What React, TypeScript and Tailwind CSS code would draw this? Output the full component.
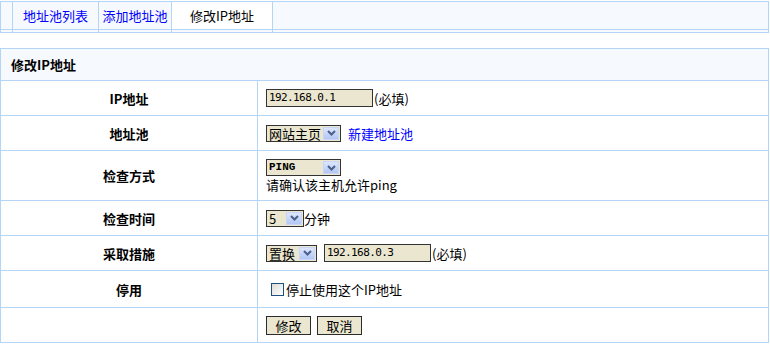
import React from "react";

const BLUE = "border-[#B4D5F5]";

function Chevron() {
  return (
    <svg width="9" height="6" viewBox="0 0 9 6">
      <path d="M1 1 L4.5 4.5 L8 1" fill="none" stroke="#4A5F8A" strokeWidth="2" />
    </svg>
  );
}

function Sel({ w, text, mono }: { w: string; text: string; mono?: boolean }) {
  return (
    <div className={`flex h-[17px] items-stretch border border-[#333] bg-[#EAE6CF] ${w}`}>
      <span
        className={`flex min-w-0 flex-1 items-center whitespace-nowrap pl-[2px] leading-[15px] ${
          mono ? "font-['Liberation_Mono',monospace] text-[11px] font-bold" : "text-[13px]"
        }`}
      >
        {text}
      </span>
      <span className="m-[1px] flex w-[16px] shrink-0 items-center justify-center border border-[#C7D6F6] bg-gradient-to-b from-[#DCE6FD] to-[#B3C7F4]">
        <Chevron />
      </span>
    </div>
  );
}

function Inp({ value }: { value: string }) {
  return (
    <div className="flex h-[18px] w-[107px] items-center border border-[#333] bg-[#EAE6CF] pl-[2px] font-['DejaVu_Sans_Mono',monospace] text-[11px] leading-[14px] tracking-[-0.6px] text-black">
      {value}
    </div>
  );
}

function Row({
  label,
  h,
  children,
  last,
}: {
  label: string;
  h: string;
  children: React.ReactNode;
  last?: boolean;
}) {
  return (
    <div className={`flex ${h} ${last ? "" : `border-b ${BLUE}`}`}>
      <div className={`flex w-[257px] items-center justify-center border-r ${BLUE} text-[13px] font-bold`}>
        {label}
      </div>
      <div className="flex flex-1 items-center pl-[8px]">{children}</div>
    </div>
  );
}

export default function App() {
  return (
    <div className="h-[344px] w-[770px] bg-white pt-[1px] font-['Noto_Sans_CJK_SC','Noto_Sans',sans-serif] text-[13px] leading-[15px] text-black">
      {/* tab bar */}
      <div className={`flex w-[769px] border ${BLUE} bg-[#F6F9FE]`}>
        <div className={`flex w-[12px] flex-col border-r ${BLUE}`}>
          <div className={`h-[28px] border-b ${BLUE}`} />
          <div className="h-[2px]" />
        </div>
        <div className={`flex w-[86px] flex-col border-r ${BLUE}`}>
          <div className={`flex h-[28px] items-center justify-center border-b ${BLUE} text-[#0000FF]`}>地址池列表</div>
          <div className="h-[2px]" />
        </div>
        <div className={`flex w-[73px] flex-col border-r ${BLUE}`}>
          <div className={`flex h-[28px] items-center justify-center border-b ${BLUE} text-[#0000FF]`}>添加地址池</div>
          <div className="h-[2px]" />
        </div>
        <div className={`flex w-[101px] flex-col border-r ${BLUE}`}>
          <div className={`flex h-[28px] items-center justify-center border-b ${BLUE} bg-white`}>修改IP地址</div>
          <div className="h-[2px]" />
        </div>
        <div className="flex flex-1 flex-col">
          <div className={`h-[28px] border-b ${BLUE}`} />
          <div className="h-[2px]" />
        </div>
      </div>

      {/* main table */}
      <div className={`mt-[15px] w-[769px] border ${BLUE}`}>
        <div className={`flex h-[32px] items-center border-b ${BLUE} bg-[#F6F9FE] pl-[10px] font-bold`}>修改IP地址</div>

        <Row label="IP地址" h="h-[35px]">
          <Inp value="192.168.0.1" />
          <span className="ml-[1px]">(必填)</span>
        </Row>

        <Row label="地址池" h="h-[35px]">
          <Sel w="w-[75px]" text="网站主页" />
          <span className="ml-[7px] text-[#0000FF]">新建地址池</span>
        </Row>

        <Row label="检查方式" h="h-[50px]">
          <div className="flex flex-col">
            <Sel w="w-[75px]" text="PING" mono />
            <span className="mt-[1px]">请确认该主机允许ping</span>
          </div>
        </Row>

        <Row label="检查时间" h="h-[35px]">
          <Sel w="w-[38px]" text="5" />
          <span>分钟</span>
        </Row>

        <Row label="采取措施" h="h-[35px]">
          <Sel w="w-[51px]" text="置换" />
          <div className="ml-[7px]">
            <Inp value="192.168.0.3" />
          </div>
          <span className="ml-[1px]">(必填)</span>
        </Row>

        <Row label="停用" h="h-[37px]">
          <span className="ml-[5px] h-[13px] w-[13px] border border-[#1C5180] bg-gradient-to-br from-[#DCDCD7] to-white" />
          <span className="ml-[2px]">停止使用这个IP地址</span>
        </Row>

        <Row label="" h="h-[34px]" last>
          <button className="flex h-[19px] w-[45px] items-center justify-center border border-[#2B2B2B] bg-[#EAE6CF] text-[13px] leading-[15px]">
            修改
          </button>
          <button className="ml-[6px] flex h-[19px] w-[45px] items-center justify-center border border-[#2B2B2B] bg-[#EAE6CF] text-[13px] leading-[15px]">
            取消
          </button>
        </Row>
      </div>
    </div>
  );
}
